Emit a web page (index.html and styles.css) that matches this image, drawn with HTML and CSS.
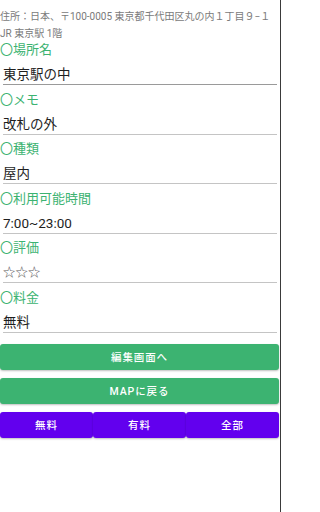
FILE: index.html
```html
<!DOCTYPE html>
<html lang="ja">
<head>
<meta charset="utf-8">
<title>詳細</title>
<link rel="stylesheet" href="styles.css">
</head>
<body>
<div class="screen">
  <div class="address">住所：日本、〒100-0005 東京都千代田区丸の内１丁目９−１ JR 東京駅 1階</div>

  <div class="field first">
    <div class="label">〇場所名</div>
    <div class="value focused">東京駅の中</div>
  </div>
  <div class="field">
    <div class="label">〇メモ</div>
    <div class="value">改札の外</div>
  </div>
  <div class="field">
    <div class="label">〇種類</div>
    <div class="value">屋内</div>
  </div>
  <div class="field">
    <div class="label">〇利用可能時間</div>
    <div class="value">7:00~23:00</div>
  </div>
  <div class="field">
    <div class="label">〇評価</div>
    <div class="value stars">☆☆☆</div>
  </div>
  <div class="field">
    <div class="label">〇料金</div>
    <div class="value">無料</div>
  </div>

  <div class="actions">
    <button class="btn green">編集画面へ</button>
    <button class="btn green">MAPに戻る</button>
    <div class="filters">
      <button class="btn purple">無料</button>
      <button class="btn purple">有料</button>
      <button class="btn purple">全部</button>
    </div>
  </div>
</div>
</body>
</html>
```

FILE: styles.css
```css
html, body {
  margin: 0;
  padding: 0;
  background: #ffffff;
}

body {
  font-family: Roboto, "Noto Sans CJK JP", sans-serif;
}

.screen {
  width: 281px;
  height: 512px;
  box-sizing: border-box;
  border-right: 1px solid #3a3a3a;
  overflow: hidden;
}

.address {
  padding: 8px 6px 0 0;
  font-size: 10px;
  line-height: 17px;
  color: #7a7a7a;
  height: 34px;
}

.field {
  padding: 0 3px 0 0;
}

.label {
  padding-top: 6.6px;
  font-size: 13px;
  line-height: 16px;
  height: 16px;
  color: #3cb371;
  white-space: nowrap;
}

.field.first .label {
  padding-top: 0;
}

.value {
  margin-left: 3px;
  padding-top: 6px;
  height: 20px;
  font-size: 13.5px;
  line-height: 20px;
  color: #1e1e1e;
  border-bottom: 1px solid #c4c4c4;
}

.value.focused {
  border-bottom-color: #9a9a9a;
}

.value.stars {
  font-family: "Noto Sans CJK JP", sans-serif;
  font-size: 12.5px;
  color: #5a5a5a;
}

.actions {
  margin-top: 11px;
  display: flex;
  flex-direction: column;
  gap: 8px;
  width: 280px;
}

.btn {
  font-family: Roboto, "Noto Sans CJK JP", sans-serif;
  height: 26px;
  border: none;
  border-radius: 3px;
  padding: 0;
  margin: 0;
  font-size: 10.5px;
  font-weight: 500;
  letter-spacing: 0.9px;
  color: #ffffff;
  box-shadow: 0 1px 2px rgba(0, 0, 0, 0.25);
  width: 279px;
}

.green {
  background: #3cb371;
}

.filters {
  display: flex;
  width: 279px;
}

.purple {
  background: #6200ee;
  flex: 1;
  width: auto;
}
```
